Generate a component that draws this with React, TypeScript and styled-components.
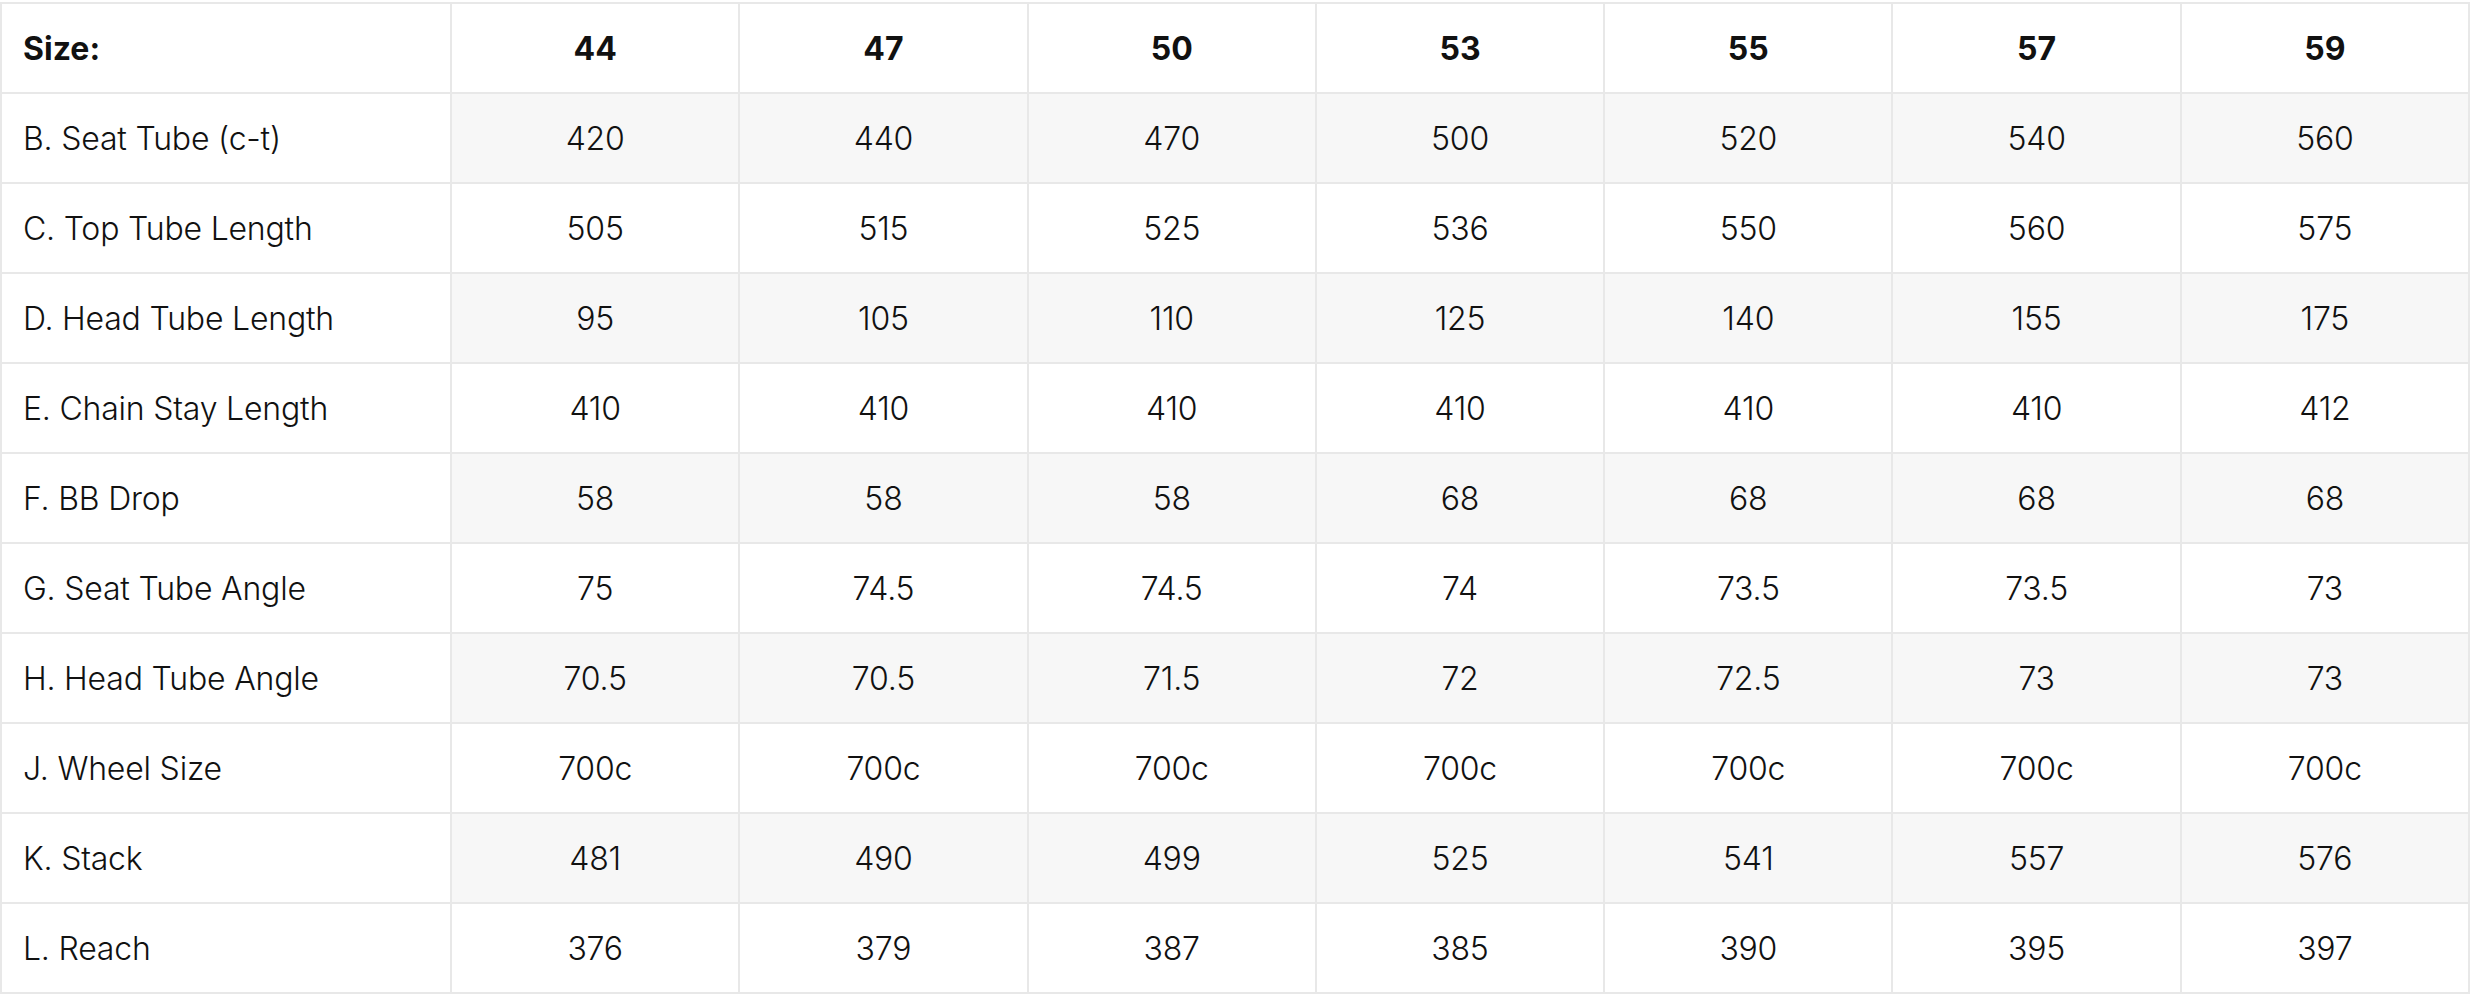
import React from "react";
import styled, { createGlobalStyle } from "styled-components";

const sizes = ["44", "47", "50", "53", "55", "57", "59"];

const rows: { label: string; values: string[] }[] = [
    { label: "B. Seat Tube (c-t)", values: ["420", "440", "470", "500", "520", "540", "560"] },
    { label: "C. Top Tube Length", values: ["505", "515", "525", "536", "550", "560", "575"] },
    { label: "D. Head Tube Length", values: ["95", "105", "110", "125", "140", "155", "175"] },
    { label: "E. Chain Stay Length", values: ["410", "410", "410", "410", "410", "410", "412"] },
    { label: "F. BB Drop", values: ["58", "58", "58", "68", "68", "68", "68"] },
    { label: "G. Seat Tube Angle", values: ["75", "74.5", "74.5", "74", "73.5", "73.5", "73"] },
    { label: "H. Head Tube Angle", values: ["70.5", "70.5", "71.5", "72", "72.5", "73", "73"] },
    { label: "J. Wheel Size", values: ["700c", "700c", "700c", "700c", "700c", "700c", "700c"] },
    { label: "K. Stack", values: ["481", "490", "499", "525", "541", "557", "576"] },
    { label: "L. Reach", values: ["376", "379", "387", "385", "390", "395", "397"] },
];

const GlobalStyle = createGlobalStyle`
    html, body {
        margin: 0;
        padding: 0;
        background: #ffffff;
    }
    body {
        padding-top: 2px;
        font-family: Inter, "Noto Sans", sans-serif;
        color: #111111;
    }
`;

const Table = styled.div`
    width: 2470px;
    box-sizing: border-box;
    display: grid;
    grid-template-columns: 450px repeat(7, 1fr);
    border-top: 2px solid #e8e8e8;
    border-left: 2px solid #e8e8e8;
`;

const Cell = styled.div<{ $shaded?: boolean; $label?: boolean; $head?: boolean }>`
    box-sizing: border-box;
    height: 90px;
    display: flex;
    align-items: center;
    justify-content: ${(p) => (p.$label ? "flex-start" : "center")};
    padding: ${(p) => (p.$label ? "0 0 0 21px" : "0")};
    border-right: 2px solid #e8e8e8;
    border-bottom: 2px solid #e8e8e8;
    background: ${(p) => (p.$shaded ? "#f7f7f7" : "#ffffff")};
    font-size: 32px;
    font-weight: ${(p) => (p.$head ? 700 : 300)};
    letter-spacing: ${(p) => (p.$head ? "0" : "-0.2px")};
    white-space: nowrap;
`;

export default function App() {
    return (
        <>
            <GlobalStyle />
            <Table>
                <Cell $label $head>
                    Size:
                </Cell>
                {sizes.map((s) => (
                    <Cell $head key={s}>
                        {s}
                    </Cell>
                ))}
                {rows.map((row, i) => (
                    <React.Fragment key={row.label}>
                        <Cell $label>{row.label}</Cell>
                        {row.values.map((v, j) => (
                            <Cell $shaded={i % 2 === 0} key={j}>
                                {v}
                            </Cell>
                        ))}
                    </React.Fragment>
                ))}
            </Table>
        </>
    );
}
